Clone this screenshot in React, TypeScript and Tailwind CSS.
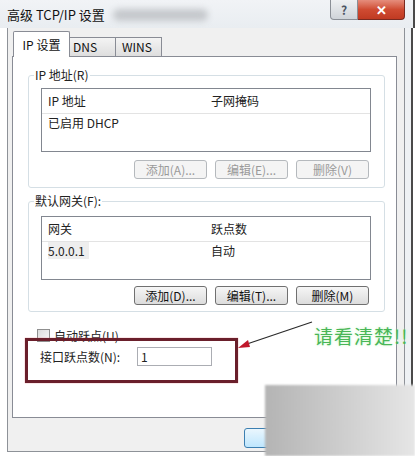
import React from 'react';

const WinButton = ({ label, disabled }: { label: string; disabled?: boolean }) => (
  <div
    className={
      disabled
        ? 'flex h-[19px] w-[73px] items-center justify-center rounded-[3px] border border-[#b5b9bd] bg-[#f4f4f4] text-[12px] leading-none text-[#9a9a9a]'
        : 'flex h-[19px] w-[73px] items-center justify-center rounded-[3px] border border-[#707070] bg-gradient-to-b from-[#f6f6f6] to-[#dcdcdc] text-[12px] leading-none text-[#111]'
    }
  >
    {label}
  </div>
);

const ListView = ({ cols, row, shade }: { cols: string[]; row: string[]; shade?: boolean }) => (
  <div className="h-[64px] w-[330px] border border-[#828790] bg-white text-[12px] leading-none text-[#222]">
    <div className="flex h-[25px] items-center border-b border-[#e3e3e3]">
      <div className="w-[169px] pl-[6px]">{cols[0]}</div>
      <div>{cols[1]}</div>
    </div>
    <div className="flex h-[17px] items-center">
      <div className="w-[169px] pl-[6px]">
        <span className={shade ? 'bg-[#eeeeee] pr-[4px]' : ''}>{row[0]}</span>
      </div>
      <div>{row[1]}</div>
    </div>
  </div>
);

const Group = ({
  title,
  top,
  listGap,
  padBottom,
  children,
}: {
  title: string;
  top: string;
  listGap: string;
  padBottom: string;
  children: React.ReactNode;
}) => (
  <fieldset className={`ml-[15px] w-[357px] rounded-[3px] border border-[#d5dfe5] p-0 ${top}`}>
    <legend className="ml-[5px] px-[1px] text-[12px] leading-[14px] text-[#222]">{title}</legend>
    <div className={`pl-[12px] ${listGap} ${padBottom}`}>{children}</div>
  </fieldset>
);

export default function App() {
  return (
    <div className="relative h-[456px] w-[415px] overflow-hidden bg-white font-['Noto_Sans_CJK_SC',sans-serif]">
      {/* title bar */}
      <div className="flex h-[28px] items-start bg-gradient-to-b from-[#f1f3f6] to-[#e9edf1]">
        <div className="flex h-[28px] items-center pl-[7px] text-[13px] leading-none text-[#111]">高级 TCP/IP 设置</div>
        <div className="ml-[8px] mt-[9px] h-[12px] w-[95px] rounded-full bg-[#c5c8cc] blur-[3px]" />
        <div className="ml-auto flex">
          <div className="flex h-[20px] w-[28px] items-center justify-center rounded-bl-[4px] border border-t-0 border-[#8a8f96] bg-gradient-to-b from-[#eef0f2] to-[#cfd4d9] text-[12px] font-bold leading-none text-[#4b5563]">
            ?
          </div>
          <div className="flex h-[20px] w-[47px] items-center justify-center rounded-br-[4px] border border-l-0 border-t-0 border-[#7a2a20] bg-gradient-to-b from-[#e58d7c] via-[#cf4b32] to-[#c03a22] text-[13px] font-bold leading-none text-white">
            ✕
          </div>
        </div>
        <div className="h-[28px] w-[10px] border-r-2 border-[#4a4a4a]" />
      </div>

      {/* window body */}
      <div className="flex">
        <div className="w-[7px]" />
        <div className="w-[398px] border-b border-l border-r border-[#8e9298] bg-[#f0f0f0] pt-[3px]">
          <div className="pl-[4px]">
            {/* tabs */}
            <div className="relative z-10 flex items-end pl-[1px] text-[12px] leading-none text-[#111]">
              <div className="-mb-[1px] flex h-[26px] w-[57px] items-center justify-center rounded-t-[2px] border border-b-0 border-[#898c95] bg-white">
                IP 设置
              </div>
              <div className="flex h-[19px] w-[46px] items-center border-r border-t border-[#898c95] bg-gradient-to-b from-[#f4f4f4] to-[#dedede] pl-[3px]">
                DNS
              </div>
              <div className="flex h-[19px] w-[46px] items-center border-r border-t border-[#898c95] bg-gradient-to-b from-[#f4f4f4] to-[#dedede] pl-[6px]">
                WINS
              </div>
            </div>

            {/* panel */}
            <div className="h-[362px] w-[385px] border border-[#898c95] bg-white">
              <Group title="IP 地址(R)" top="mt-[11px]" listGap="pt-[6px]" padBottom="pb-[8px]">
                <ListView cols={['IP 地址', '子网掩码']} row={['已启用 DHCP', '']} />
                <div className="mt-[8px] flex w-[330px] justify-end gap-[8px] pr-[2px]">
                  <WinButton label="添加(A)..." disabled />
                  <WinButton label="编辑(E)..." disabled />
                  <WinButton label="删除(V)" disabled />
                </div>
              </Group>

              <Group title="默认网关(F):" top="mt-[6px]" listGap="pt-[8px]" padBottom="pb-[6px]">
                <ListView cols={['网关', '跃点数']} row={['5.0.0.1', '自动']} shade />
                <div className="mt-[6px] flex w-[330px] justify-end gap-[8px] pr-[2px]">
                  <WinButton label="添加(D)..." />
                  <WinButton label="编辑(T)..." />
                  <WinButton label="删除(M)" />
                </div>
              </Group>

              <div className="ml-[24px] mt-[17px] flex items-center text-[12px] leading-none text-[#222]">
                <div className="h-[13px] w-[13px] border border-[#8f8f8f] bg-gradient-to-br from-[#dcdcdc] to-[#f8f8f8]" />
                <span className="ml-[4px]">自动跃点(U)</span>
              </div>

              <div className="ml-[27px] mt-[5px] flex items-center text-[12px] leading-none text-[#222]">
                <span className="w-[97px]">接口跃点数(N):</span>
                <div className="flex h-[19px] w-[75px] items-center border border-[#abadb3] bg-white pl-[3px]">1</div>
              </div>
            </div>
          </div>

          {/* footer */}
          <div className="h-[33px] pl-[236px] pt-[10px]">
            <div className="h-[20px] w-[75px] rounded-[3px] border border-[#3c7fb1] bg-gradient-to-b from-[#eaf6fd] to-[#bee6fd]" />
          </div>
        </div>
        <div className="h-[424px] w-[8px] border-r-2 border-[#4a4a4a] bg-[#eef1f4]" />
      </div>

      {/* annotation: red box */}
      <div className="absolute left-[25px] top-[338px] h-[45px] w-[213px] border-[3px] border-[#6a1f2b] shadow-[0_0_1px_#e0707a]" />

      {/* annotation: arrow */}
      <svg className="absolute left-[232px] top-[316px]" width="90" height="40" viewBox="0 0 90 40">
        <line x1="80" y1="6" x2="12" y2="29" stroke="#2a2a2a" strokeWidth="1.2" />
        <polygon points="6,32 16,24 18,31" fill="#c0182c" />
      </svg>

      {/* annotation: text */}
      <div className="absolute left-[314px] top-[326px] whitespace-nowrap text-[19px] font-normal leading-none tracking-[1px] text-[#48b657] [text-shadow:0_0_3px_#c9f3c3]">
        请看清楚!!
      </div>

      {/* watermark */}
      <div className="absolute left-[265px] top-[385px] h-[71px] w-[150px] bg-gradient-to-r from-[#b4b4b4] via-[#cdcdcd] to-[#e6e6e6] blur-[1px]" />
    </div>
  );
}
